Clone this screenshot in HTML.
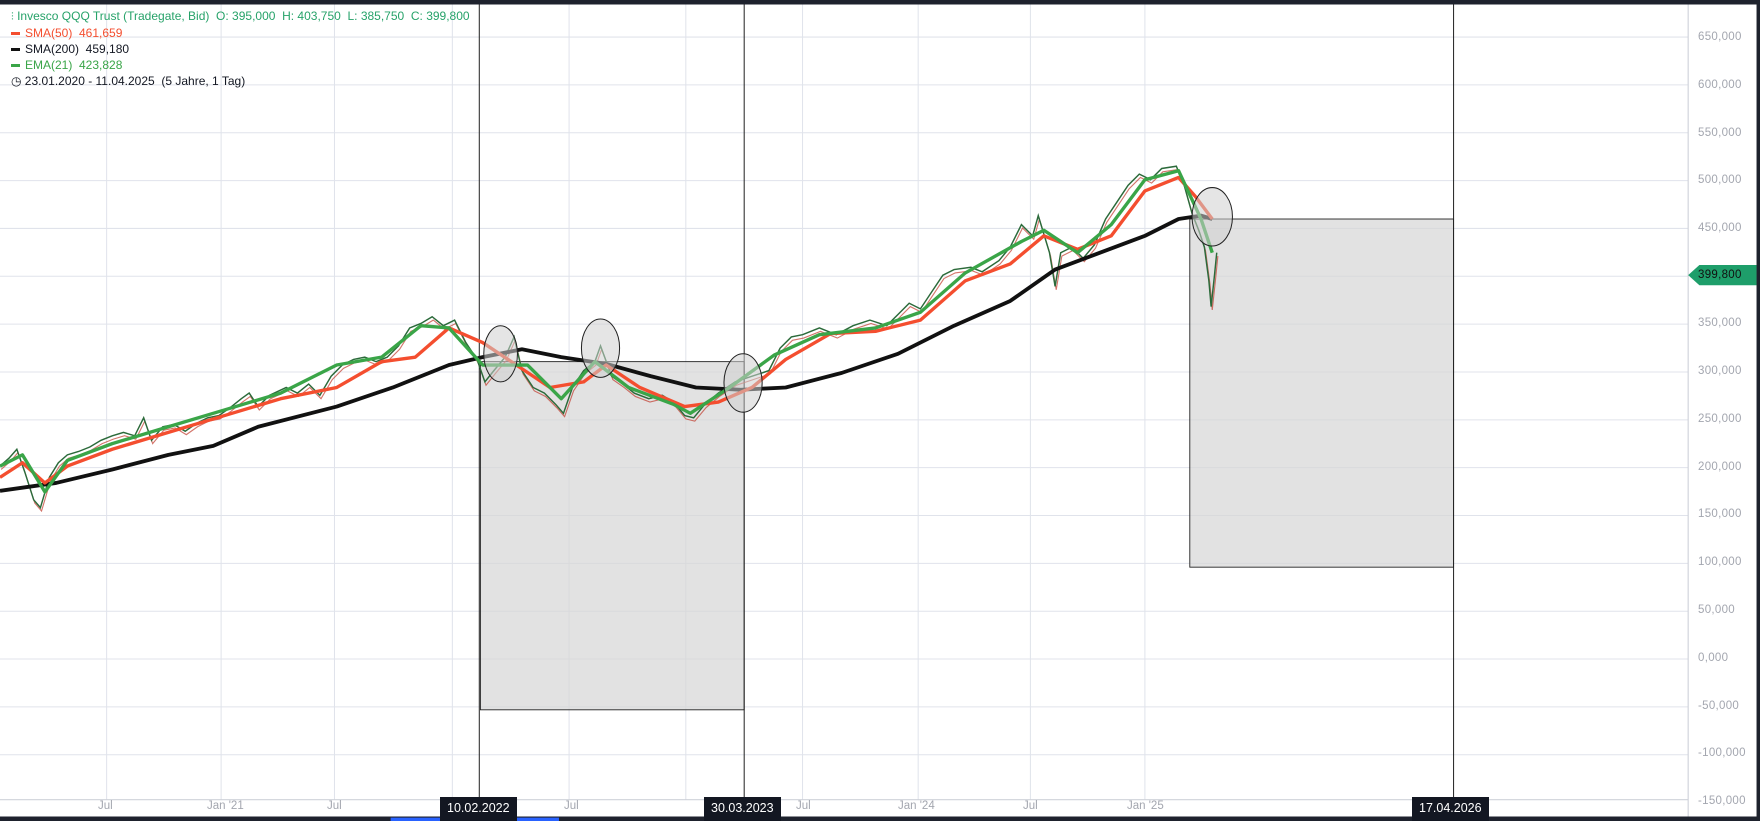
<!DOCTYPE html>
<html><head><meta charset="utf-8"><style>
body{margin:0;width:1760px;height:821px;overflow:hidden;background:#1e222d;font-family:"Liberation Sans",sans-serif;position:relative}
#c{position:absolute;left:0;top:0}
.leg{position:absolute;left:11px;font-size:12px;white-space:nowrap;line-height:14px}
.yl{position:absolute;left:1698px;font-size:11.5px;color:#a3a6af;letter-spacing:.3px;line-height:12px}
.xl{position:absolute;top:799px;font-size:11.5px;color:#a3a6af;line-height:14px}
.db{position:absolute;top:797px;height:24px;background:#131722;color:#fff;font-size:12.5px;line-height:23px;padding:0 7px}
</style></head><body>
<svg id="c" width="1760" height="821" viewBox="0 0 1568 731" preserveAspectRatio="none">
<rect x="0" y="4" width="1565" height="723" fill="#fff"/>
<g stroke="#e0e3eb" stroke-width="0.9">
<line x1="0" x2="1504" y1="33" y2="33"/><line x1="0" x2="1504" y1="75.6" y2="75.6"/><line x1="0" x2="1504" y1="118.2" y2="118.2"/><line x1="0" x2="1504" y1="160.8" y2="160.8"/><line x1="0" x2="1504" y1="203.4" y2="203.4"/><line x1="0" x2="1504" y1="246" y2="246"/><line x1="0" x2="1504" y1="288.6" y2="288.6"/><line x1="0" x2="1504" y1="331.2" y2="331.2"/><line x1="0" x2="1504" y1="373.8" y2="373.8"/><line x1="0" x2="1504" y1="416.4" y2="416.4"/><line x1="0" x2="1504" y1="459" y2="459"/><line x1="0" x2="1504" y1="501.6" y2="501.6"/><line x1="0" x2="1504" y1="544.2" y2="544.2"/><line x1="0" x2="1504" y1="586.8" y2="586.8"/><line x1="0" x2="1504" y1="629.4" y2="629.4"/><line x1="0" x2="1504" y1="672" y2="672"/>
<line x1="95" x2="95" y1="4" y2="712"/><line x1="197" x2="197" y1="4" y2="712"/><line x1="298" x2="298" y1="4" y2="712"/><line x1="403" x2="403" y1="4" y2="712"/><line x1="507" x2="507" y1="4" y2="712"/><line x1="611" x2="611" y1="4" y2="712"/><line x1="715" x2="715" y1="4" y2="712"/><line x1="818" x2="818" y1="4" y2="712"/><line x1="918" x2="918" y1="4" y2="712"/><line x1="1020" x2="1020" y1="4" y2="712"/>
</g>
<line x1="1504" x2="1504" y1="4" y2="727" stroke="#cfd2d9"/>
<line x1="0" x2="1504" y1="712" y2="712" stroke="#cfd2d9"/>
<rect x="428" y="322" width="235" height="310" fill="#d6d6d6" fill-opacity=".7" stroke="#222" stroke-width=".8"/>
<rect x="1060" y="195" width="235" height="310" fill="#d6d6d6" fill-opacity=".7" stroke="#222" stroke-width=".8"/>
<g stroke="#222" stroke-width=".9"><line x1="427" x2="427" y1="4" y2="712"/><line x1="663" x2="663" y1="4" y2="712"/><line x1="1295" x2="1295" y1="4" y2="712"/></g>
<polyline fill="none" stroke="#c0392b" stroke-width="1" stroke-opacity=".7" transform="translate(1,3)" points="0,415 8,408 15,400 22,420 30,445 36,452 44,425 52,412 60,405 70,402 80,398 90,392 100,388 110,385 120,388 128,372 135,392 145,380 155,378 165,384 175,377 185,372 195,370 205,363 215,355 222,350 230,362 240,352 255,345 265,350 275,342 285,352 295,335 305,325 315,320 325,318 335,322 345,318 355,308 365,292 375,288 385,282 395,290 405,285 415,305 425,320 432,340 440,330 450,318 458,300 465,330 475,345 485,350 495,360 502,368 510,345 520,330 530,322 535,308 545,335 555,342 565,350 578,355 590,352 600,358 610,370 618,372 628,360 640,350 655,340 670,335 685,330 695,310 705,300 715,298 730,292 745,298 760,290 775,285 790,290 800,280 810,270 820,275 830,260 840,245 850,240 865,238 875,242 890,232 900,220 910,200 920,210 925,192 935,225 940,255 945,225 955,220 965,230 975,218 985,195 995,180 1005,165 1015,155 1025,160 1035,150 1048,148 1055,165 1062,190 1068,205 1073,220 1077,250 1079,273 1082,245 1084,225"/>
<polyline fill="none" stroke="#2b6a3a" stroke-width="1.3" points="0,415 8,408 15,400 22,420 30,445 36,452 44,425 52,412 60,405 70,402 80,398 90,392 100,388 110,385 120,388 128,372 135,392 145,380 155,378 165,384 175,377 185,372 195,370 205,363 215,355 222,350 230,362 240,352 255,345 265,350 275,342 285,352 295,335 305,325 315,320 325,318 335,322 345,318 355,308 365,292 375,288 385,282 395,290 405,285 415,305 425,320 432,340 440,330 450,318 458,300 465,330 475,345 485,350 495,360 502,368 510,345 520,330 530,322 535,308 545,335 555,342 565,350 578,355 590,352 600,358 610,370 618,372 628,360 640,350 655,340 670,335 685,330 695,310 705,300 715,298 730,292 745,298 760,290 775,285 790,290 800,280 810,270 820,275 830,260 840,245 850,240 865,238 875,242 890,232 900,220 910,200 920,210 925,192 935,225 940,255 945,225 955,220 965,230 975,218 985,195 995,180 1005,165 1015,155 1025,160 1035,150 1048,148 1055,165 1062,190 1068,205 1073,220 1077,250 1079,273 1082,245 1084,225"/>
<polyline fill="none" stroke="#111" stroke-width="3.4" stroke-linejoin="round" points="0,437 50,430 100,418 150,405 190,397 230,380 300,362 350,345 400,325 430,318 465,311 500,318 540,324 580,335 620,345 660,347 700,345 750,332 800,315 850,290 900,268 940,240 980,225 1020,210 1050,195 1070,192 1080,195"/>
<polyline fill="none" stroke="#f44e2f" stroke-width="3" stroke-linejoin="round" points="0,425 20,412 40,430 60,415 100,400 150,385 200,370 250,355 300,345 340,322 370,318 400,292 430,305 460,325 490,345 520,340 540,325 570,345 610,362 640,358 670,345 700,320 740,297 780,295 820,285 860,250 900,235 930,210 960,222 990,210 1020,170 1050,158 1065,175 1080,195"/>
<polyline fill="none" stroke="#3aa548" stroke-width="3" stroke-linejoin="round" points="0,415 20,405 40,438 60,410 100,395 150,380 200,365 250,350 300,325 340,318 375,290 400,292 430,325 470,325 500,355 530,322 560,345 600,360 615,368 650,345 690,316 730,298 780,292 820,278 860,243 910,215 930,205 960,225 990,200 1020,160 1050,152 1070,195 1080,225"/>
<g fill="#cfcfcf" fill-opacity=".55" stroke="#222" stroke-width=".9">
<ellipse cx="446" cy="315" rx="15" ry="25"/><ellipse cx="535" cy="310" rx="17" ry="26"/><ellipse cx="662" cy="341" rx="17" ry="26"/><ellipse cx="1080" cy="193" rx="18" ry="26"/>
</g>
<polygon points="1504,245 1514,236 1565,236 1565,254 1514,254" fill="#1e9e6a"/>
<rect x="0" y="0" width="1568" height="4" fill="#1e222d"/>
<rect x="0" y="727" width="1568" height="4" fill="#1e222d"/>
<rect x="1565" y="0" width="3" height="731" fill="#1e222d"/>
<rect x="348" y="728" width="150" height="3" fill="#2962ff"/>
</svg>
<div class="leg" style="top:9px;color:#26a269"><span style="font-size:11px">⫶</span> Invesco QQQ Trust (Tradegate, Bid)&nbsp; O: 395,000&nbsp; H: 403,750&nbsp; L: 385,750&nbsp; C: 399,800</div>
<div class="leg" style="top:26px;color:#f44e2f"><span style="display:inline-block;width:9px;height:3px;background:#f44e2f;vertical-align:middle;margin-right:5px"></span>SMA(50)&nbsp; 461,659</div>
<div class="leg" style="top:42px;color:#131722"><span style="display:inline-block;width:9px;height:3px;background:#111;vertical-align:middle;margin-right:5px"></span>SMA(200)&nbsp; 459,180</div>
<div class="leg" style="top:58px;color:#3aa548"><span style="display:inline-block;width:9px;height:3px;background:#3aa548;vertical-align:middle;margin-right:5px"></span>EMA(21)&nbsp; 423,828</div>
<div class="leg" style="top:74px;color:#131722">◷ 23.01.2020 - 11.04.2025&nbsp; (5 Jahre, 1 Tag)</div>
<div class="yl" style="top:31px">650,000</div><div class="yl" style="top:79px">600,000</div><div class="yl" style="top:127px">550,000</div><div class="yl" style="top:174px">500,000</div><div class="yl" style="top:222px">450,000</div>
<div class="yl" style="top:269px;color:#111">399,800</div>
<div class="yl" style="top:317px">350,000</div><div class="yl" style="top:365px">300,000</div><div class="yl" style="top:413px">250,000</div><div class="yl" style="top:461px">200,000</div><div class="yl" style="top:508px">150,000</div><div class="yl" style="top:556px">100,000</div><div class="yl" style="top:604px">50,000</div><div class="yl" style="top:652px">0,000</div><div class="yl" style="top:700px">-50,000</div><div class="yl" style="top:747px">-100,000</div><div class="yl" style="top:795px">-150,000</div>
<div class="xl" style="left:98px">Jul</div><div class="xl" style="left:207px">Jan '21</div><div class="xl" style="left:327px">Jul</div><div class="xl" style="left:564px">Jul</div><div class="xl" style="left:796px">Jul</div><div class="xl" style="left:898px">Jan '24</div><div class="xl" style="left:1023px">Jul</div><div class="xl" style="left:1127px">Jan '25</div>
<div class="db" style="left:440px">10.02.2022</div>
<div class="db" style="left:704px">30.03.2023</div>
<div class="db" style="left:1412px">17.04.2026</div>
</body></html>
